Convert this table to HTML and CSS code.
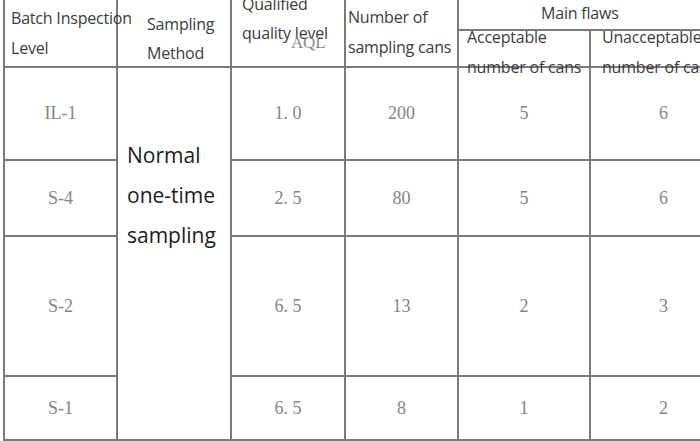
FILE: index.html
```html
<!DOCTYPE html>
<html>
<head>
<meta charset="utf-8">
<link rel="stylesheet" href="styles.css">
</head>
<body>
<div class="sheet">
  <div class="grid">
    <div class="cell hd span2 h-level over"><div class="txt">Batch Inspection<br>Level</div></div>
    <div class="cell hd span2 h-method"><div class="txt">Sampling<br>Method</div></div>
    <div class="cell hd span2 h-aql"><div class="txt">Qualified<br>quality level</div><span class="aql">AQL</span></div>
    <div class="cell hd span2 h-num"><div class="txt">Number of<br>sampling cans</div></div>
    <div class="cell hd wide h-main"><div class="txt">Main flaws</div></div>
    <div class="cell hd h-acc over"><div class="txt">Acceptable<br>number of cans</div></div>
    <div class="cell hd h-unacc over"><div class="txt">Unacceptable<br>number of cans</div></div>

    <div class="cell num">IL-1</div>
    <div class="cell method"><div class="mtxt">Normal<br>one-time<br>sampling</div></div>
    <div class="cell num">1. 0</div>
    <div class="cell num">200</div>
    <div class="cell num">5</div>
    <div class="cell num">6</div>

    <div class="cell num">S-4</div>
    <div class="cell num">2. 5</div>
    <div class="cell num">80</div>
    <div class="cell num">5</div>
    <div class="cell num">6</div>

    <div class="cell num">S-2</div>
    <div class="cell num">6. 5</div>
    <div class="cell num">13</div>
    <div class="cell num">2</div>
    <div class="cell num">3</div>

    <div class="cell num">S-1</div>
    <div class="cell num">6. 5</div>
    <div class="cell num">8</div>
    <div class="cell num">1</div>
    <div class="cell num">2</div>
  </div>
</div>
</body>
</html>
```
FILE: styles.css
```css
html, body {
  margin: 0;
  padding: 0;
  background: #fff;
}
body {
  width: 700px;
  height: 441px;
  overflow: hidden;
}
.sheet {
  padding-left: 3px;
}
.grid {
  display: grid;
  grid-template-columns: 111px 112px 112px 111px 130px 145px;
  grid-template-rows: 29px 35px 91px 74px 138px 62px;
  gap: 2px;
  padding: 0 2px 2px 2px;
  background: #7a7a7a;
  width: max-content;
}
.cell {
  background: #fff;
  white-space: nowrap;
  overflow: visible;
}
.over {
  z-index: 1;
}
.span2 { grid-row: span 2; }
.wide { grid-column: span 2; }
.hd {
  font-family: "Open Sans", "Noto Sans", sans-serif;
  font-size: 16px;
  color: #3c3c3c;
  line-height: 30px;
  letter-spacing: -0.2px;
}
.h-level .txt { padding: 3px 0 0 6px; }
.h-method .txt { padding: 10px 0 0 29px; line-height: 29px; }
.h-aql { position: relative; }
.h-aql .txt { margin-top: -10px; padding-left: 10px; line-height: 29px; }
.h-num .txt { padding: 2px 0 0 2px; }
.h-main .txt { padding-left: 82px; line-height: 27px; }
.h-acc .txt { margin-top: -9px; padding-left: 8px; }
.h-unacc .txt { margin-top: -9px; padding-left: 11px; }
.aql {
  position: absolute;
  left: 59px;
  top: 34px;
  font-family: "Liberation Serif", serif;
  font-size: 17px;
  line-height: 18px;
  color: #8a8a8a;
}
.num {
  display: flex;
  align-items: center;
  justify-content: center;
  font-family: "Liberation Serif", serif;
  font-size: 18px;
  color: #858585;
}
.method {
  grid-row: span 4;
}
.mtxt {
  padding: 67px 0 0 9px;
  font-family: "Open Sans", "Noto Sans", sans-serif;
  font-size: 21px;
  line-height: 40px;
  color: #1c1c1c;
}
```
